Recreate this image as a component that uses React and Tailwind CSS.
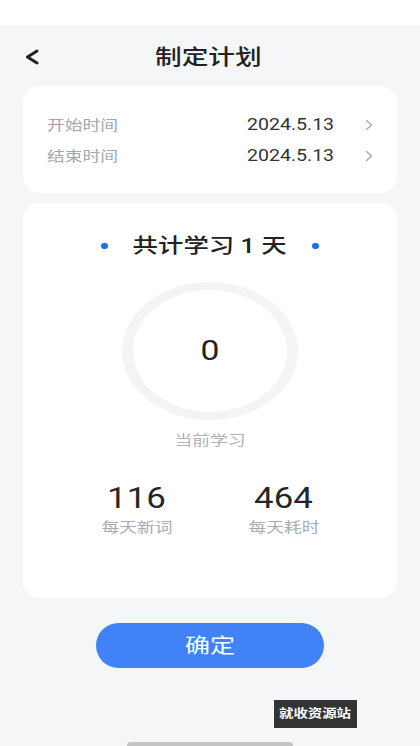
const FONT = { fontFamily: 'Roboto, "Noto Sans CJK SC", "Noto Sans", sans-serif' };

function Arrow() {
  return (
    <svg viewBox="0 0 8 12" className="ml-auto mr-[24px] h-[12px] w-[8px]" fill="none">
      <polyline points="1.5,1.5 6.5,6 1.5,10.5" stroke="#a8abb2" strokeWidth="1.4" strokeLinecap="round" strokeLinejoin="round" />
    </svg>
  );
}

function DateRow({ label, value }) {
  return (
    <div className="flex h-[31px] items-center">
      <span className="inline-block w-[200px] origin-left scale-x-[1.27] text-[14px] leading-[20px] text-[#a3a7b0]">{label}</span>
      <span className="inline-block origin-left scale-x-[1.22] text-[16px] leading-[20px] text-[#333]">{value}</span>
      <Arrow />
    </div>
  );
}

function Stat({ value, label }) {
  return (
    <div className="flex w-[100px] flex-col items-center">
      <span className="inline-block scale-x-[1.2] text-[29px] leading-[36px] text-[#262626]">{value}</span>
      <span className="mt-[1px] inline-block scale-x-[1.27] text-[14px] leading-[20px] text-[#a8acb4]">{label}</span>
    </div>
  );
}

export default function App() {
  return (
    <div className="flex h-[746px] w-[420px] flex-col overflow-hidden bg-white" style={FONT}>
      <div className="h-[25px] bg-white" />
      <div className="flex flex-1 flex-col bg-[#f5f6f8]">
        <div className="flex h-[61px] items-center px-[24px] pt-[3px]">
          <svg viewBox="0 0 16 16" className="h-[16px] w-[16px]" fill="none">
            <polyline points="13,2 3.5,8 13,14" stroke="#222" strokeWidth="3" strokeLinecap="round" strokeLinejoin="round" />
          </svg>
          <span className="ml-[115px] inline-block origin-left scale-x-[1.27] text-[21px] font-medium leading-[28px] text-[#222]">
            制定计划
          </span>
        </div>

        <div className="mx-[23px] flex flex-col rounded-[16px] bg-white pl-[24px] pt-[23px] pb-[22px]">
          <DateRow label="开始时间" value="2024.5.13" />
          <DateRow label="结束时间" value="2024.5.13" />
        </div>

        <div className="mx-[23px] mt-[10px] flex h-[395px] flex-col items-center rounded-[16px] bg-white">
          <div className="mt-[29px] flex items-center">
            <span className="h-[6px] w-[7px] rounded-full bg-[#1d6ff2]" />
            <span className="mx-[41px] inline-block scale-x-[1.27] text-[20px] font-medium leading-[28px] text-[#222]">
              共计学习 1 天
            </span>
            <span className="h-[6px] w-[7px] rounded-full bg-[#1d6ff2]" />
          </div>
          <div className="mt-[22px] flex h-[138px] w-[176px] items-center justify-center rounded-[50%] border-x-[11px] border-y-[8px] border-[#f3f4f6]">
            <span className="inline-block scale-x-[1.2] text-[28px] leading-[36px] text-[#222]">0</span>
          </div>
          <span className="mt-[10px] inline-block scale-x-[1.27] text-[14px] leading-[20px] text-[#aeb2b9]">当前学习</span>
          <div className="mt-[30px] flex gap-[47px]">
            <Stat value="116" label="每天新词" />
            <Stat value="464" label="每天耗时" />
          </div>
        </div>

        <div className="mt-[25px] flex justify-center">
          <button className="h-[45px] w-[228px] rounded-full bg-[#4182f6] text-white">
            <span className="inline-block scale-x-[1.25] text-[20px] leading-[28px]">确定</span>
          </button>
        </div>

        <div className="mt-[32px] flex justify-end pr-[63px]">
          <span className="flex h-[28px] w-[83px] items-center justify-center bg-[#333]">
            <span className="inline-block scale-x-[1.2] text-[12px] font-bold leading-[16px] text-white">就收资源站</span>
          </span>
        </div>
        <div className="mt-auto flex justify-center">
          <div className="h-[4px] w-[166px] rounded-t-sm bg-[#c4c4c4]" />
        </div>
      </div>
    </div>
  );
}
